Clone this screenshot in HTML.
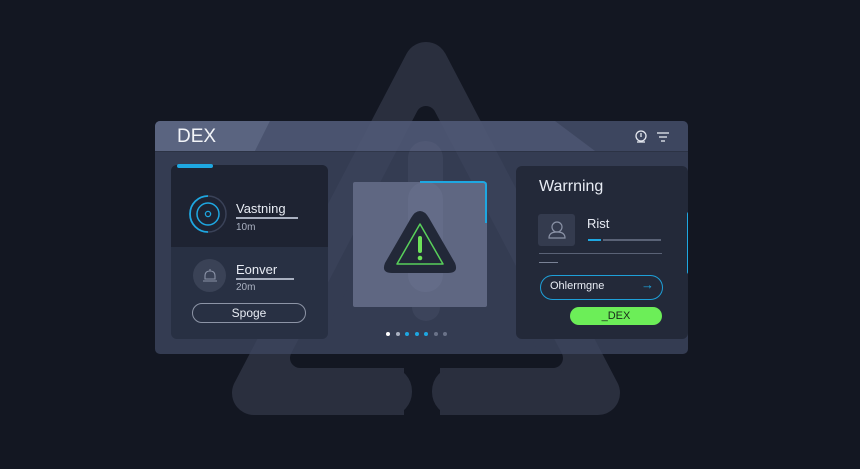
<!DOCTYPE html>
<html><head><meta charset="utf-8"><style>
*{margin:0;padding:0;box-sizing:border-box}
body{width:860px;height:469px;background:#131722;position:relative;overflow:hidden;font-family:"Liberation Sans",sans-serif;color:#e8ecf4}
.abs{position:absolute}
.panel{left:155px;top:121px;width:533px;height:233px;background:rgba(62,70,96,0.78);border-radius:5px;overflow:hidden}
.card{border-radius:6px}
.t{position:absolute;white-space:nowrap}
</style></head><body>
<svg class="abs" style="left:0;top:0" width="860" height="469">
<polygon points="426,64 254,393 598,393" fill="#2a2f3e" stroke="#2a2f3e" stroke-width="44" stroke-linejoin="round"/>
<polygon points="426,116 300,358 553,358" fill="#131722" stroke="#131722" stroke-width="20" stroke-linejoin="round"/>
<rect x="404" y="340" width="36" height="90" fill="#131722"/>
<rect x="370" y="368" width="42" height="47" rx="23" fill="#2a2f3e"/>
<rect x="432" y="368" width="42" height="47" rx="23" fill="#2a2f3e"/>
<rect x="370" y="368" width="20" height="47" fill="#2a2f3e"/>
<rect x="454" y="368" width="20" height="47" fill="#2a2f3e"/>
</svg>
<div class="abs panel">
 <svg class="abs" style="left:0;top:0" width="533" height="30">
  <rect width="533" height="30" fill="rgba(80,90,120,0.35)"/>
  <polygon points="0,0 115,0 100,30 0,30" fill="#5a6480"/>
  <polygon points="115,0 400,0 440,30 100,30" fill="rgba(90,100,130,0.45)"/>
 </svg>
 <div class="abs" style="left:253px;top:20px;width:35px;height:150px;border-radius:17px;background:rgba(120,130,160,0.12)"></div>
 <div class="abs" style="left:257px;top:172px;width:28px;height:28px;border-radius:50%;background:rgba(120,130,160,0.12)"></div>
 <div class="abs" style="left:0;top:30px;width:533px;height:1px;background:rgba(0,0,0,0.15)"></div>
 <div class="t" style="left:22px;top:5px;font-size:19px;color:#f2f4f8">DEX</div>
 <svg class="abs" style="left:478px;top:8px" width="40" height="16">
  <circle cx="8" cy="7" r="5" fill="none" stroke="#e6e9f0" stroke-width="1.3"/>
  <line x1="8" y1="4" x2="8" y2="8" stroke="#e6e9f0" stroke-width="1.3"/>
  <line x1="4" y1="13" x2="12" y2="13" stroke="#e6e9f0" stroke-width="1.3"/>
  <line x1="24" y1="4" x2="36" y2="4" stroke="#e6e9f0" stroke-width="1.3"/>
  <line x1="26" y1="8" x2="34" y2="8" stroke="#e6e9f0" stroke-width="1.3"/>
  <line x1="28" y1="12" x2="32" y2="12" stroke="#e6e9f0" stroke-width="1.3"/>
 </svg>
 <div class="abs card" style="left:16px;top:44px;width:157px;height:174px;background:#283043;overflow:hidden">
  <div class="abs" style="left:0;top:0;width:157px;height:82px;background:#1e2332"></div>
 </div>
 <div class="abs" style="left:22px;top:43px;width:36px;height:4px;background:#1ea7e1;border-radius:2px"></div>
 <svg class="abs" style="left:32px;top:72px" width="42" height="42">
  <path d="M21 3 A18 18 0 0 1 21 39" fill="none" stroke="#3a4258" stroke-width="1.5"/>
  <path d="M21 39 A18 18 0 0 1 3 21 A18 18 0 0 1 21 3" fill="none" stroke="#1ea7e1" stroke-width="1.8"/>
  <circle cx="21" cy="21" r="11" fill="none" stroke="#1ea7e1" stroke-width="1.5"/>
  <circle cx="21" cy="21" r="2.6" fill="none" stroke="#1ea7e1" stroke-width="1.3"/>
 </svg>
 <div class="t" style="left:81px;top:80px;font-size:13px">Vastning</div>
 <div class="abs" style="left:81px;top:96px;width:62px;height:2px;background:#a9b0c0"></div>
 <div class="t" style="left:81px;top:101px;font-size:10px;color:#aab1c1">10m</div>
 <div class="abs" style="left:38px;top:138px;width:33px;height:33px;border-radius:50%;background:#3a4256"></div>
 <svg class="abs" style="left:46px;top:145px" width="18" height="18">
  <path d="M4 13 L4 10 Q4 5 9 5 Q14 5 14 10 L14 13 Z M2 15 L16 15 M9 3 L9 5" fill="none" stroke="#8a92a6" stroke-width="1.1"/>
 </svg>
 <div class="t" style="left:81px;top:141px;font-size:13px">Eonver</div>
 <div class="abs" style="left:81px;top:157px;width:58px;height:2px;background:#a9b0c0"></div>
 <div class="t" style="left:81px;top:161px;font-size:10px;color:#aab1c1">20m</div>
 <div class="abs" style="left:37px;top:182px;width:114px;height:20px;border:1px solid #8d94a6;border-radius:10px;text-align:center;font-size:12px;line-height:18px">Spoge</div>
 <div class="abs" style="left:198px;top:61px;width:134px;height:125px;background:#5f6782;border-radius:2px"></div>
 <div class="abs" style="left:253px;top:61px;width:35px;height:110px;border-radius:17px;background:rgba(140,150,180,0.12)"></div>
 <div class="abs" style="left:265px;top:60px;width:67px;height:42px;border-top:2px solid #1ea7e1;border-right:2px solid #1ea7e1;border-top-right-radius:4px"></div>
 <svg class="abs" style="left:226px;top:86px" width="78" height="70">
  <path d="M39 4 Q34 4 30 11 L4 56 Q0 66 11 66 L67 66 Q78 66 74 56 L48 11 Q44 4 39 4 Z" fill="#222838"/>
  <path d="M39 17 L16 57 L62 57 Z" fill="none" stroke="#58d05a" stroke-width="1.5" stroke-linejoin="round"/>
  <rect x="37" y="29" width="4" height="17" rx="2" fill="#6ee25a"/>
  <circle cx="39" cy="51" r="2.3" fill="#6ee25a"/>
 </svg>
 <svg class="abs" style="left:228px;top:209px" width="70" height="8">
  <circle cx="5" cy="4" r="2" fill="#fff"/><circle cx="15" cy="4" r="2" fill="#aab1c1"/>
  <circle cx="24" cy="4" r="2" fill="#1ea7e1"/><circle cx="34" cy="4" r="2" fill="#1ea7e1"/>
  <circle cx="43" cy="4" r="2" fill="#1ea7e1"/><circle cx="53" cy="4" r="2" fill="#6a7288"/>
  <circle cx="62" cy="4" r="2" fill="#6a7288"/>
 </svg>
 <div class="abs card" style="left:361px;top:45px;width:172px;height:173px;background:#232939"></div>
 <div class="abs" style="left:532px;top:91px;width:4px;height:62px;background:#1ea7e1;border-radius:2px"></div>
 <div class="t" style="left:384px;top:57px;font-size:16px">Warrning</div>
 <div class="abs" style="left:383px;top:93px;width:37px;height:32px;background:#343b4e;border-radius:3px"></div>
 <svg class="abs" style="left:390px;top:97px" width="24" height="24">
  <circle cx="12" cy="9" r="5" fill="none" stroke="#8a92a6" stroke-width="1.2"/>
  <path d="M4 20 Q4 14 12 14 Q20 14 20 20 Z" fill="none" stroke="#8a92a6" stroke-width="1.2"/>
 </svg>
 <div class="t" style="left:432px;top:95px;font-size:13px">Rist</div>
 <div class="abs" style="left:433px;top:118px;width:13px;height:2px;background:#1ea7e1"></div>
 <div class="abs" style="left:448px;top:118px;width:58px;height:2px;background:#5a6276"></div>
 <div class="abs" style="left:384px;top:132px;width:123px;height:1px;background:#5a6276"></div>
 <div class="abs" style="left:384px;top:141px;width:19px;height:1px;background:#7a8296"></div>
 <div class="abs" style="left:385px;top:154px;width:123px;height:25px;border:1.5px solid #1e9fd8;border-radius:13px"></div>
 <div class="t" style="left:395px;top:159px;font-size:11px">Ohlermgne</div>
 <div class="t" style="left:486px;top:156px;font-size:13px;color:#1ea7e1">→</div>
 <div class="abs" style="left:415px;top:186px;width:92px;height:18px;background:#6cee58;border-radius:9px;color:#1a2a1a;font-size:11px;text-align:center;line-height:18px">_DEX</div>
</div>
</body></html>
